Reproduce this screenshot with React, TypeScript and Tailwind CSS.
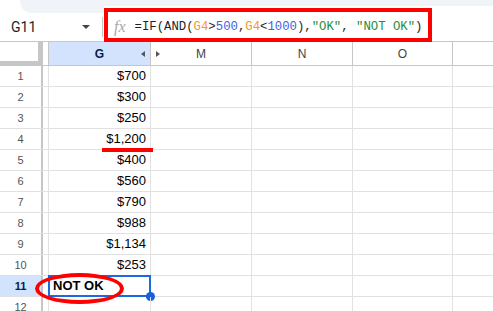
const values = ["$700", "$300", "$250", "$1,200", "$400", "$560", "$790", "$988", "$1,134", "$253", "NOT OK", ""]

function Formula() {
  const orange = "text-[#f29a2e]"
  const blue = "text-[#3e63dd]"
  const green = "text-[#1e8e3e]"
  return (
    <span className="font-['Liberation_Mono',monospace] text-[12.3px] text-[#1f1f1f] whitespace-pre">
      =IF(AND(<span className={orange}>G4</span>&gt;<span className={blue}>500</span>,
      <span className={orange}>G4</span>&lt;<span className={blue}>1000</span>),
      <span className={green}>"OK"</span>, <span className={green}>"NOT OK"</span>)
    </span>
  )
}

export default function App() {
  return (
    <div className="relative w-[493px] h-[311px] overflow-hidden bg-white font-['Liberation_Sans',Arial,sans-serif]">
      {/* top strip */}
      <div className="flex items-start">
        <div className="ml-[20px] w-[84px] h-[13px] bg-[#f0f4f9] rounded-bl-xl" />
        <div className="flex-1 h-[6px] bg-[#f0f4f9]" />
      </div>

      {/* formula bar */}
      <div className="flex items-center h-[29px] border-b border-[#c7c7c7]">
        <div className="w-[103px] flex items-center pl-[11px] pr-[12px] border-r border-[#c7c7c7] h-[20px]">
          <span className="font-['Roboto',sans-serif] text-[14px] text-[#1f1f1f]">G11</span>
          <span className="ml-auto w-0 h-0 border-l-[4px] border-r-[4px] border-t-[4px] border-l-transparent border-r-transparent border-t-[#444]" />
        </div>
        <span className="ml-[11px] mr-[9px] font-['Liberation_Serif',serif] italic text-[16px] text-[#a8a8a8]">fx</span>
        <Formula />
      </div>

      {/* column headers */}
      <div className="flex h-[24px] border-b border-[#c4c7c5] text-[12px] text-[#444]">
        <div className="w-[43px] bg-white border-r-[5px] border-b-[4px] border-[#c4c7c5]" />
        <div className="w-[5px]" />
        <div className="relative w-[103px] flex items-center justify-center bg-[#d3e3fd] border-l border-r border-[#c4c7c5] font-bold text-[#041e49]">
          G
          <span className="absolute right-[5px] top-[9px] w-0 h-0 border-t-[3px] border-b-[3px] border-r-[4px] border-t-transparent border-b-transparent border-r-[#555]" />
        </div>
        <div className="relative w-[101px] flex items-center justify-center border-r border-[#c4c7c5]">
          <span className="absolute left-[5px] top-[9px] w-0 h-0 border-t-[3px] border-b-[3px] border-l-[4px] border-t-transparent border-b-transparent border-l-[#555]" />
          M
        </div>
        <div className="w-[101px] flex items-center justify-center border-r border-[#c4c7c5]">N</div>
        <div className="w-[100px] flex items-center justify-center border-r border-[#c4c7c5]">O</div>
        <div className="flex-1" />
      </div>

      {/* rows */}
      {values.map((v, i) => {
        const sel = i === 10
        return (
          <div key={i} className="flex h-[21px] border-b border-[#e1e1e1]">
            <div
              className={
                sel
                  ? "w-[43px] flex items-center justify-center border-r-2 border-[#c4c7c5] bg-[#d3e3fd] text-[11px] font-bold text-[#041e49]"
                  : "w-[43px] flex items-center justify-center border-r-2 border-[#c4c7c5] text-[11px] text-[#555]"
              }
            >
              {i + 1}
            </div>
            <div className="w-[5px]" />
            <div
              className={
                sel
                  ? "relative w-[103px] flex items-center px-[4px] border-l border-r border-[#e1e1e1] text-[13px] font-bold text-black"
                  : "relative w-[103px] flex items-center justify-end px-[4px] border-l border-r border-[#e1e1e1] text-[13px] text-black"
              }
            >
              {v}
              {sel && (
                <>
                  <div className="absolute left-[-1px] top-[-1px] w-[103px] h-[22px] border-2 border-[#1a6ae0]" />
                  <div className="absolute right-[-5px] bottom-[-5px] w-[9px] h-[9px] rounded-full bg-[#1a5fd8]" />
                </>
              )}
            </div>
            <div className="w-[101px] border-r border-[#e1e1e1]" />
            <div className="w-[101px] border-r border-[#e1e1e1]" />
            <div className="w-[100px] border-r border-[#e1e1e1]" />
            <div className="flex-1" />
          </div>
        )
      })}

      {/* annotations */}
      <div className="absolute left-[104px] top-[8px] w-[328px] h-[34px] border-4 border-[#ff0000]" />
      <div className="absolute left-[102px] top-[148px] w-[51px] h-[4px] bg-[#ff0000]" />
      <div className="absolute left-[35px] top-[273px] w-[89px] h-[31px] rounded-[50%] border-4 border-[#ff0000]" />
    </div>
  )
}
